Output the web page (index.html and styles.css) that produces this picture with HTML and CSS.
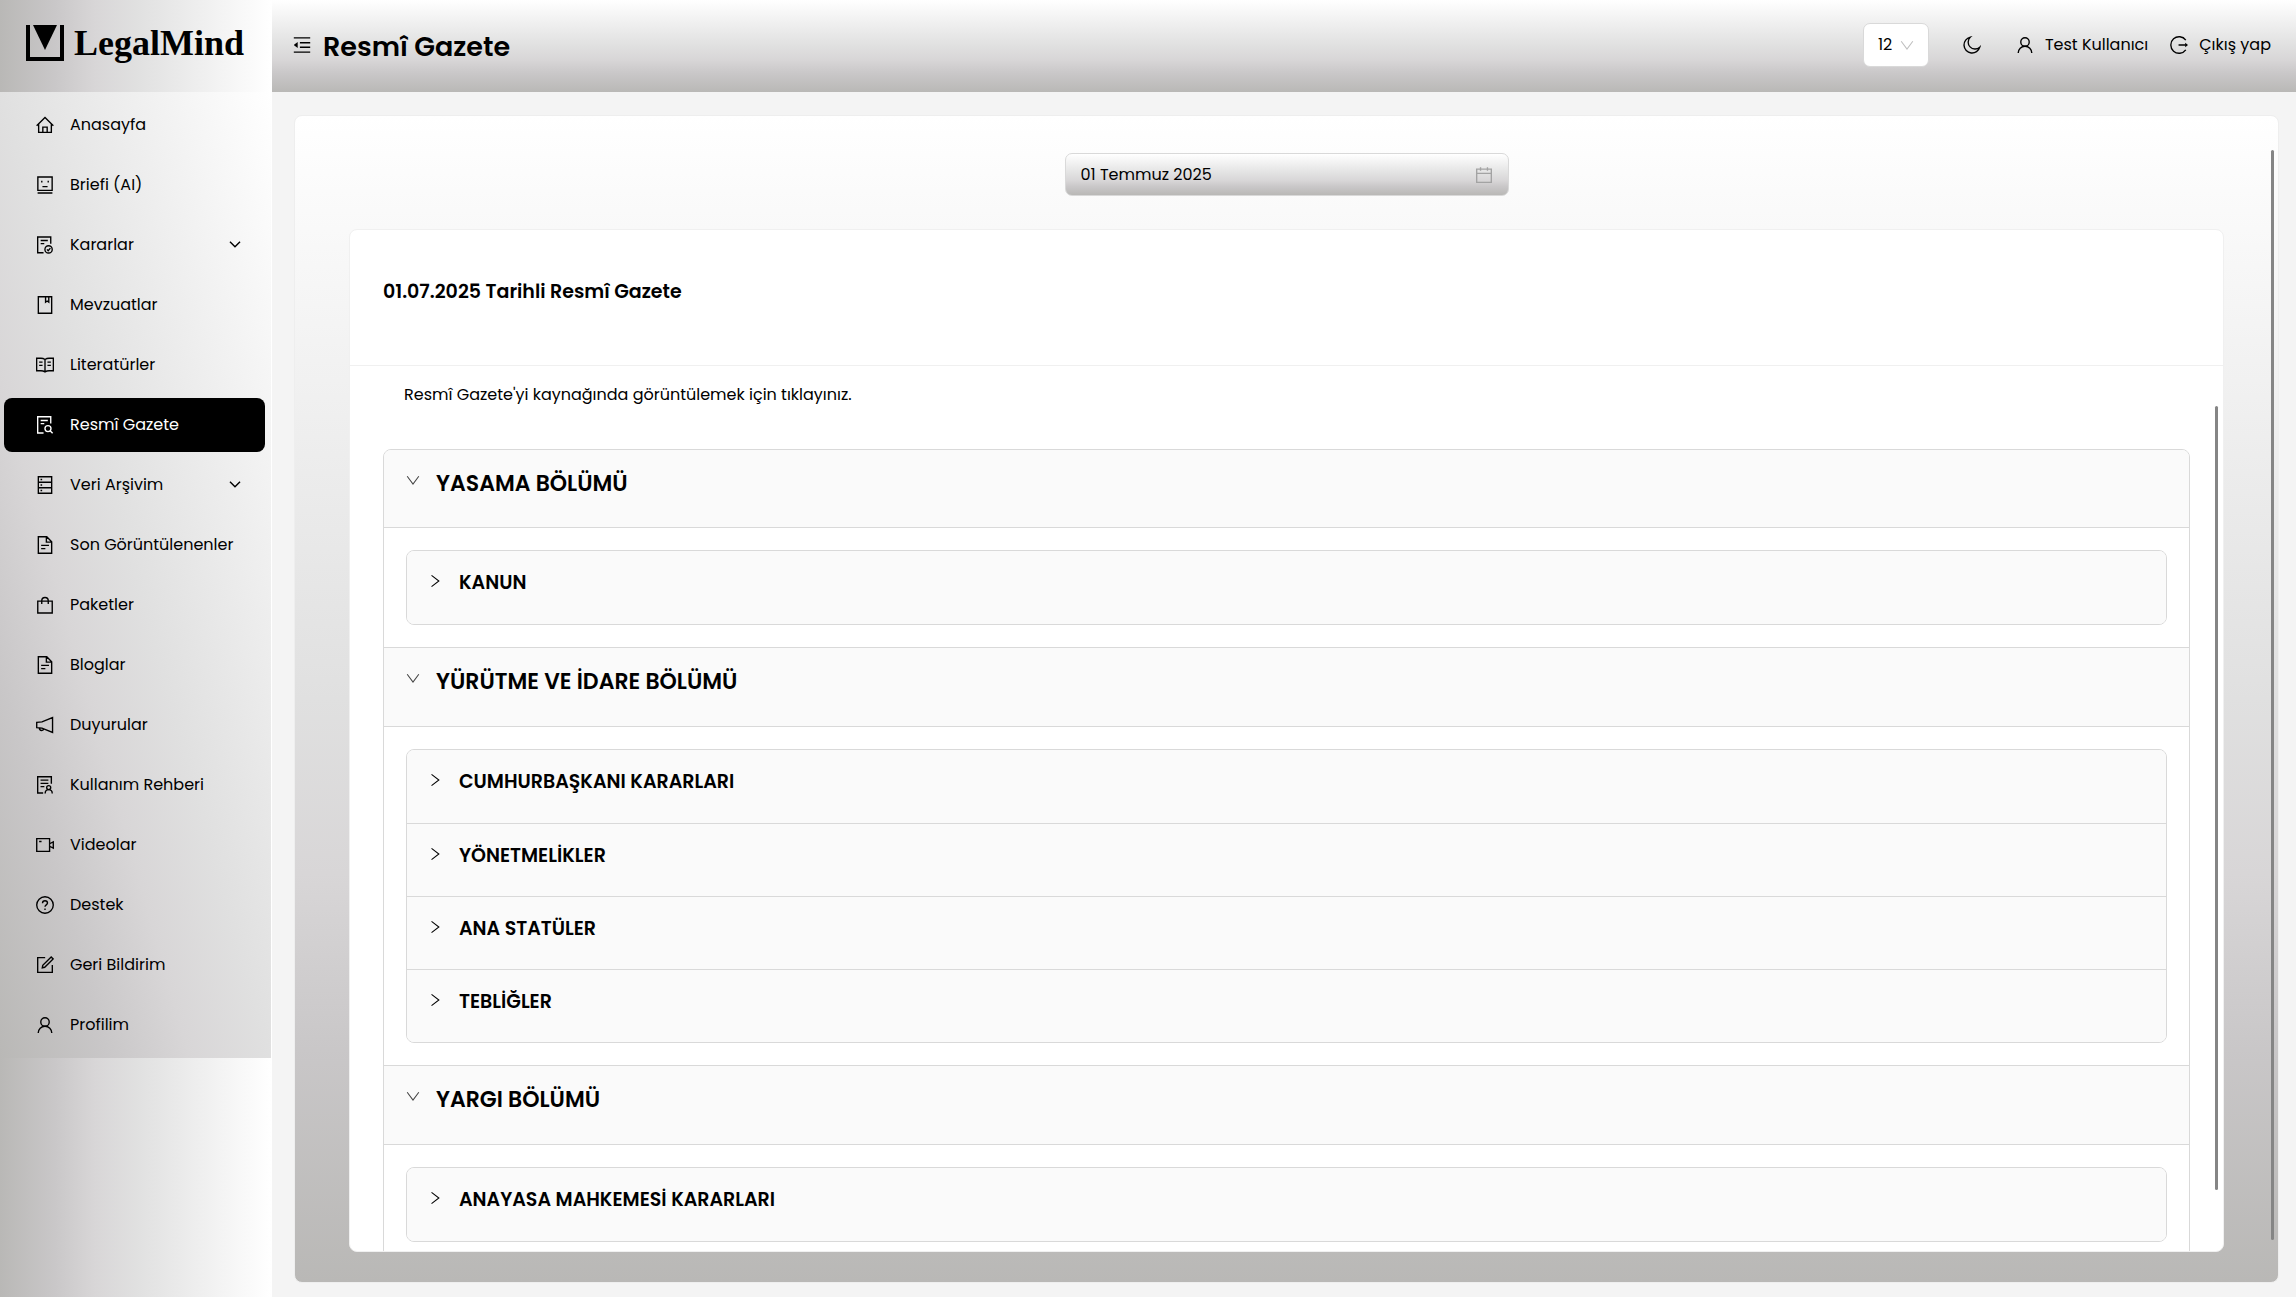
FILE: index.html
```html
<!DOCTYPE html>
<html lang="tr">
<head>
  <meta charset="UTF-8">
  <meta name="viewport" content="width=device-width, initial-scale=1">
  <title>Resmî Gazete - LegalMind</title>
  <link rel="stylesheet" href="styles.css">
</head>
<body>

  <!-- icon set -->
  <svg class="sprite" aria-hidden="true">
    <symbol id="i-home" viewBox="64 64 896 896"><path d="M96 548L512 136l416 412M196 470v406h632V470M404 876V620h216v256"/></symbol>
    <symbol id="i-robot" viewBox="64 64 896 896"><path d="M156 116h712v664H156zM352 300v90M672 300v90M384 590h256M144 912h736"/></symbol>
    <symbol id="i-audit" viewBox="64 64 896 896"><path d="M440 900H148V116h650v330M296 290h356M296 446h180"/><circle cx="690" cy="730" r="182"/><path d="M610 730l60 62 110-124"/></symbol>
    <symbol id="i-book" viewBox="64 64 896 896"><path d="M180 104h664v816H180zM540 104v270l80-60 80 60V104"/></symbol>
    <symbol id="i-read" viewBox="64 64 896 896"><path d="M512 236c-60-40-130-60-200-60H96v620h216c70 0 140 20 200 56 60-36 130-56 200-56h216V176H712c-70 0-140 20-200 60zv600M220 370h170M220 530h170M634 370h170M634 530h170"/></symbol>
    <symbol id="i-search" viewBox="64 64 896 896"><path d="M440 910H148V104h650v330M296 290h356M296 446h180"/><circle cx="660" cy="690" r="150"/><path d="M768 798l124 124"/></symbol>
    <symbol id="i-db" viewBox="64 64 896 896"><path d="M180 104h664v816H180zM180 376h664M180 648h664M290 240h80M290 512h80M290 784h80"/></symbol>
    <symbol id="i-file" viewBox="64 64 896 896"><path d="M180 104h420l244 244v572H180zM580 104v264h264M320 530h390M320 690h210"/></symbol>
    <symbol id="i-bag" viewBox="64 64 896 896"><path d="M152 316h720v596H152zM350 460V300c0-90 70-164 162-164s162 74 162 164v160"/></symbol>
    <symbol id="i-horn" viewBox="64 64 896 896"><path d="M100 384l260-30 528-210v736L360 670l-260-30zM230 664c0 70 50 120 116 120s100-40 110-80"/></symbol>
    <symbol id="i-guide" viewBox="64 64 896 896"><path d="M420 910H148V104h680v350M290 270h390M290 430h390M290 590h190"/><circle cx="696" cy="640" r="100"/><path d="M520 930c0-110 80-190 176-190s176 80 176 190"/></symbol>
    <symbol id="i-video" viewBox="64 64 896 896"><path d="M100 196h640v632H100zM740 450l184-90v304l-184-90M220 340h120"/></symbol>
    <symbol id="i-help" viewBox="64 64 896 896"><circle cx="512" cy="512" r="412"/><path d="M388 420c0-72 54-122 124-122s124 48 124 118c0 90-124 90-124 180M512 680v76"/></symbol>
    <symbol id="i-form" viewBox="64 64 896 896"><path d="M520 148H148v728h728V510M376 650l24-120 420-416 96 96-420 416z"/></symbol>
    <symbol id="i-user" viewBox="64 64 896 896"><circle cx="512" cy="362" r="210"/><path d="M174 910c0-190 150-338 338-338s338 148 338 338"/></symbol>
    <symbol id="i-fold" viewBox="64 64 896 896"><path d="M104 160h816M408 400h512M408 624h512M104 864h816"/><path class="solid" d="M115 519l182 144V361L115 505z"/></symbol>
    <symbol id="i-moon" viewBox="64 64 896 896"><path d="M430 120a400 400 0 1 0 470 500 300 300 0 0 1-470-500z"/></symbol>
    <symbol id="i-logout" viewBox="64 64 896 896"><path d="M850 270A412 412 0 1 0 850 754M490 512h360"/><path class="solid" d="M820 400l140 112-140 112z"/></symbol>
    <symbol id="i-cal" viewBox="64 64 896 896"><path d="M148 222h728v654H148zM148 430h728M340 120v180M684 120v180"/></symbol>
    <symbol id="i-down" viewBox="64 64 896 896"><path d="M140 270l372 500 372-500"/></symbol>
    <symbol id="i-arrow" viewBox="64 64 896 896"><path d="M190 300l322 322 322-322"/></symbol>
    <symbol id="i-right" viewBox="64 64 896 896"><path d="M290 150l470 362-470 362"/></symbol>
  </svg>

  <aside class="sidebar">
    <a class="logo" href="#">
      <svg class="logo-mark" viewBox="0 0 38 36">
        <path d="M0 0h4v32h30V0h4v36H0z"/>
        <path d="M7 0h24L19 25z"/>
      </svg>
      <span>LegalMind</span>
    </a>
    <nav class="menu">
      <a href="#"><svg class="icon"><use href="#i-home"/></svg>Anasayfa</a>
      <a href="#"><svg class="icon"><use href="#i-robot"/></svg>Briefi (AI)</a>
      <a href="#"><svg class="icon"><use href="#i-audit"/></svg>Kararlar<svg class="icon arrow"><use href="#i-arrow"/></svg></a>
      <a href="#"><svg class="icon"><use href="#i-book"/></svg>Mevzuatlar</a>
      <a href="#"><svg class="icon"><use href="#i-read"/></svg>Literatürler</a>
      <a href="#" class="active"><svg class="icon"><use href="#i-search"/></svg>Resmî Gazete</a>
      <a href="#"><svg class="icon"><use href="#i-db"/></svg>Veri Arşivim<svg class="icon arrow"><use href="#i-arrow"/></svg></a>
      <a href="#"><svg class="icon"><use href="#i-file"/></svg>Son Görüntülenenler</a>
      <a href="#"><svg class="icon"><use href="#i-bag"/></svg>Paketler</a>
      <a href="#"><svg class="icon"><use href="#i-file"/></svg>Bloglar</a>
      <a href="#"><svg class="icon"><use href="#i-horn"/></svg>Duyurular</a>
      <a href="#"><svg class="icon"><use href="#i-guide"/></svg>Kullanım Rehberi</a>
      <a href="#"><svg class="icon"><use href="#i-video"/></svg>Videolar</a>
      <a href="#"><svg class="icon"><use href="#i-help"/></svg>Destek</a>
      <a href="#"><svg class="icon"><use href="#i-form"/></svg>Geri Bildirim</a>
      <a href="#"><svg class="icon"><use href="#i-user"/></svg>Profilim</a>
    </nav>
  </aside>

  <div class="page">
    <header class="topbar">
      <button class="icon-btn" aria-label="Menüyü daralt"><svg class="icon"><use href="#i-fold"/></svg></button>
      <h1>Resmî Gazete</h1>
      <div class="font-size">
        <select aria-label="Yazı boyutu">
          <option>12</option>
          <option>14</option>
          <option>16</option>
        </select>
        <svg class="icon small"><use href="#i-down"/></svg>
      </div>
      <button class="icon-btn moon" aria-label="Karanlık mod"><svg class="icon"><use href="#i-moon"/></svg></button>
      <a class="top-link" href="#"><svg class="icon"><use href="#i-user"/></svg>Test Kullanıcı</a>
      <a class="top-link" href="#"><svg class="icon"><use href="#i-logout"/></svg>Çıkış yap</a>
    </header>

    <main class="panel">
      <div class="date-picker">
        <input type="text" value="01 Temmuz 2025" aria-label="Tarih">
        <svg class="icon"><use href="#i-cal"/></svg>
      </div>

      <section class="card">
        <h2>01.07.2025 Tarihli Resmî Gazete</h2>
        <div class="card-body">
          <a class="source" href="#">Resmî Gazete'yi kaynağında görüntülemek için tıklayınız.</a>

          <div class="collapse">
            <button class="section-head"><svg class="icon small"><use href="#i-down"/></svg>YASAMA BÖLÜMÜ</button>
            <div class="section-body">
              <div class="group">
                <button><svg class="icon small"><use href="#i-right"/></svg>KANUN</button>
              </div>
            </div>

            <button class="section-head"><svg class="icon small"><use href="#i-down"/></svg>YÜRÜTME VE İDARE BÖLÜMÜ</button>
            <div class="section-body">
              <div class="group">
                <button><svg class="icon small"><use href="#i-right"/></svg>CUMHURBAŞKANI KARARLARI</button>
                <button><svg class="icon small"><use href="#i-right"/></svg>YÖNETMELİKLER</button>
                <button><svg class="icon small"><use href="#i-right"/></svg>ANA STATÜLER</button>
                <button><svg class="icon small"><use href="#i-right"/></svg>TEBLİĞLER</button>
              </div>
            </div>

            <button class="section-head"><svg class="icon small"><use href="#i-down"/></svg>YARGI BÖLÜMÜ</button>
            <div class="section-body">
              <div class="group">
                <button><svg class="icon small"><use href="#i-right"/></svg>ANAYASA MAHKEMESİ KARARLARI</button>
              </div>
            </div>
          </div>
        </div>
      </section>
    </main>
  </div>

</body>
</html>
```

FILE: styles.css
```css
:root {
  --stops: #b9b8b6 0%, #c9c7c8 20%, #d8d6d7 35%, #e0e0e0 50%, #fff 100%;
}

* {
  box-sizing: border-box;
}

body {
  margin: 0;
  display: flex;
  height: 100vh;
  overflow: hidden;
  background: #f4f4f4;
  color: #000;
  font-family: Poppins, Inter, "Open Sans", sans-serif;
  font-size: 16px;
  line-height: 24px;
}

a {
  color: inherit;
  text-decoration: none;
}

button, input, select {
  font: inherit;
  color: inherit;
  border: 0;
  background: none;
  padding: 0;
}

.sprite {
  display: none;
}

.icon {
  width: 18px;
  height: 18px;
  flex: none;
  fill: none;
  stroke: currentColor;
  stroke-width: 68;
}

.icon.small {
  width: 14px;
  height: 14px;
}

.solid {
  fill: currentColor;
  stroke: none;
}

/* sidebar */
.sidebar {
  width: 272px;
  flex: none;
  border-right: 1px solid #fff;
  background: linear-gradient(to right, var(--stops));
}

.logo {
  display: flex;
  align-items: center;
  gap: 10px;
  height: 92px;
  padding: 0 26px 6px;
  font-family: "Liberation Serif", serif;
  font-size: 36px;
  font-weight: bold;
}

.logo-mark {
  width: 38px;
  height: 36px;
  flex: none;
}

.menu {
  display: flex;
  flex-direction: column;
  gap: 6px;
  padding: 6px 6px 6px 4px;
  background: linear-gradient(to top right, var(--stops));
}

.menu a {
  display: flex;
  align-items: center;
  gap: 16px;
  height: 54px;
  padding: 0 23px 0 32px;
  border-radius: 8px;
  white-space: nowrap;
}

.menu a.active {
  background: #000;
  color: #fff;
}

.menu .arrow {
  width: 14px;
  height: 14px;
  margin-left: auto;
  stroke-width: 90;
}

/* top bar */
.page {
  flex: 1;
  min-width: 0;
  display: flex;
  flex-direction: column;
}

.topbar {
  display: flex;
  align-items: center;
  height: 92px;
  padding: 0 25px 3px 21px;
  background: linear-gradient(to top, var(--stops));
}

.topbar h1 {
  margin: 0 auto 0 12px;
  padding-top: 4px;
  font-size: 27px;
  font-weight: 600;
}

.icon-btn {
  display: flex;
}

.font-size {
  position: relative;
  margin-right: 34px;
}

.font-size select {
  appearance: none;
  width: 66px;
  height: 44px;
  padding: 0 14px;
  border: 1px solid #d9d9d9;
  border-radius: 7px;
  background: #fff;
}

.font-size .icon {
  position: absolute;
  right: 15px;
  top: 15px;
  color: #bfbfbf;
}

.moon {
  margin-right: 13px;
}

.top-link {
  display: flex;
  align-items: center;
  gap: 11px;
  margin-left: 22px;
}

/* content */
.panel {
  position: relative;
  flex: 1;
  min-height: 0;
  display: flex;
  flex-direction: column;
  align-items: center;
  margin: 23px 17px 14px 22px;
  padding: 37px 54px 30px 54px;
  border: 1px solid #eee;
  border-radius: 8px;
  background: linear-gradient(to top, var(--stops));
}

/* scroll thumbs */
.panel::after,
.card::after {
  content: "";
  position: absolute;
  width: 3px;
  border-radius: 2px;
  background: #858585;
}

.panel::after {
  right: 4px;
  top: 34px;
  bottom: 42px;
}

.date-picker {
  display: flex;
  align-items: center;
  width: 444px;
  height: 43px;
  flex: none;
  padding: 0 15px;
  border: 1px solid #d9d9d9;
  border-radius: 7px;
  background: linear-gradient(to top, var(--stops));
}

.date-picker input {
  flex: 1;
  min-width: 0;
}

.date-picker .icon {
  color: #a3a3a3;
}

.card {
  position: relative;
  flex: 1;
  min-height: 0;
  align-self: stretch;
  margin-top: 33px;
  overflow: hidden;
  border: 1px solid #f0f0f0;
  border-radius: 8px;
  background: #fff;
}

.card::after {
  right: 5px;
  top: 176px;
  bottom: 61px;
}

.card h2 {
  margin: 0;
  height: 136px;
  padding: 50px 33px 0;
  border-bottom: 1px solid #f0f0f0;
  font-size: 19px;
  font-weight: 600;
}

.card-body {
  padding: 17px 33px 33px;
}

.source {
  display: block;
  padding: 0 21px;
}

.collapse {
  margin-top: 42px;
  border: 1px solid #d9d9d9;
  border-radius: 8px;
  overflow: hidden;
}

.collapse button {
  display: flex;
  width: 100%;
  background: #fafafa;
  font-weight: 600;
}

.collapse .section-head {
  height: 77px;
  gap: 16px;
  padding: 22px 22px 0;
  font-size: 22px;
}

.section-head .icon {
  color: #444;
  margin-top: 1px;
}

.section-body {
  padding: 22px;
  border-top: 1px solid #d9d9d9;
}

.collapse .section-body + .section-head {
  border-top: 1px solid #d9d9d9;
  height: 79px;
}

.group {
  border: 1px solid #d9d9d9;
  border-radius: 8px;
  overflow: hidden;
}

.group button {
  height: 73px;
  gap: 17px;
  padding: 20px 21px 0;
  font-size: 19px;
}

.group .icon {
  margin-top: 3px;
}

.group button + button {
  border-top: 1px solid #d9d9d9;
}
```
